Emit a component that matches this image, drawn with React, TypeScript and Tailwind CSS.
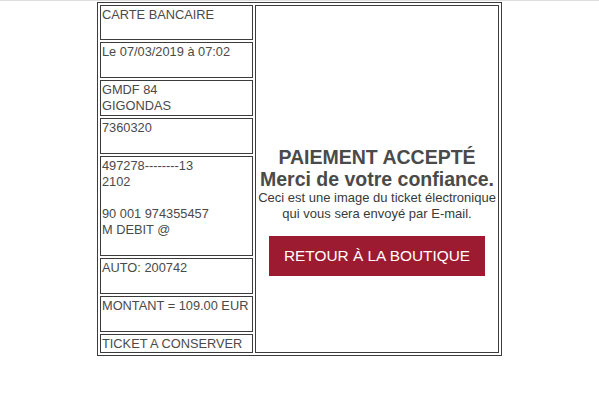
import React from 'react';

const leftCells: { lines: string[]; h: string }[] = [
  { lines: ['CARTE BANCAIRE'], h: 'h-[35px]' },
  { lines: ['Le 07/03/2019 à 07:02'], h: 'h-[36px]' },
  { lines: ['GMDF 84', 'GIGONDAS'], h: 'h-[36px]' },
  { lines: ['7360320'], h: 'h-[36px]' },
  { lines: ['497278--------13', '2102', '', '90 001 974355457', 'M DEBIT @'], h: 'h-[100px]' },
  { lines: ['AUTO: 200742'], h: 'h-[36px]' },
  { lines: ['MONTANT = 109.00 EUR'], h: 'h-[36px]' },
  { lines: ['TICKET A CONSERVER'], h: 'h-[19px]' },
];

export default function App() {
  return (
    <div className="w-[599px] h-[404px] bg-white font-['Liberation_Sans',Arial,sans-serif]">
      {/* thin top rule */}
      <div className="h-px w-full bg-[#dedede]" />

      {/* ticket table */}
      <div className="mt-px mx-auto w-[405px] border border-[#3c3c3c] p-[2px] flex gap-[2px]">
        <div className="w-[153px] flex flex-col gap-[2px]">
          {leftCells.map((cell, i) => (
            <div
              key={i}
              className={`${cell.h} border border-[#3c3c3c] pt-[1px] pl-[1px] text-[12.8px] leading-[16px] text-[#4a4a4a] whitespace-nowrap overflow-hidden`}
            >
              {cell.lines.map((l, j) => (
                <div key={j} className="h-[16px]">{l}</div>
              ))}
            </div>
          ))}
        </div>

        <div className="w-[244px] border border-[#3c3c3c] flex flex-col items-center pt-[140px]">
          <p className="text-[19.5px] leading-[22px] font-bold text-[#4a4a4a] whitespace-nowrap">PAIEMENT ACCEPTÉ</p>
          <p className="text-[19.5px] leading-[22px] font-bold text-[#4a4a4a] whitespace-nowrap">Merci de votre confiance.</p>
          <p className="text-[13px] leading-[16px] text-[#3a3a3a] text-center whitespace-nowrap">
            Ceci est une image du ticket électronique
            <br />
            qui vous sera envoyé par E-mail.
          </p>
          <button className="mt-[13.5px] w-[216px] h-[40px] bg-[#9d1b31] text-white text-[15.4px] flex items-center justify-center whitespace-nowrap">
            RETOUR À LA BOUTIQUE
          </button>
        </div>
      </div>
    </div>
  );
}
